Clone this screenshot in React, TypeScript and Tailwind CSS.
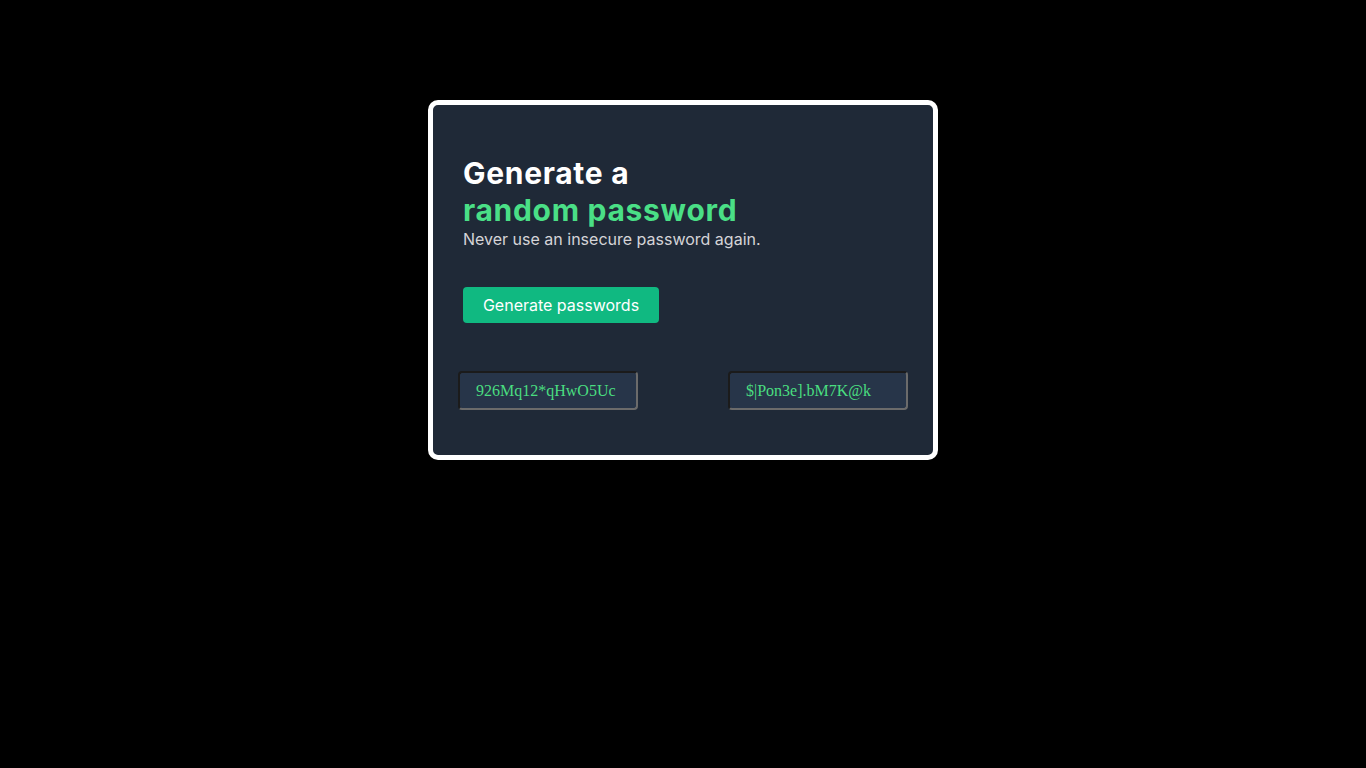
export default function App() {
  const passwords = ["926Mq12*qHwO5Uc", "$|Pon3e].bM7K@k"];

  return (
    <div className="min-h-screen bg-black pt-[100px] font-['Inter',sans-serif]">
      <div className="mx-auto h-[360px] w-[510px] rounded-[10px] border-[5px] border-white bg-[#1f2937] px-[25px]">
        <div className="px-[5px] pt-[50px]">
          <h1 className="text-[30px] font-bold leading-[37px] tracking-[0.7px] text-white">
            Generate a
            <br />
            <span className="text-[#4adf86]">random password</span>
          </h1>
          <p className="text-[16px] leading-[20px] text-[#d5d4d8]">
            Never use an insecure password again.
          </p>
          <button
            type="button"
            className="mt-[38px] h-[36px] w-[196px] rounded-[4px] bg-[#10b981] text-[16px] text-white"
          >
            Generate passwords
          </button>
        </div>
        <div className="mt-[48px] flex justify-between">
          {passwords.map((pw) => (
            <div
              key={pw}
              className="flex h-[39px] w-[180px] items-center rounded-[4px] border-2 border-t-[#1b1b1b] border-l-[#1b1b1b] border-r-[#6b6b6b] border-b-[#6b6b6b] bg-[#273549] pl-[16px] font-['Liberation_Serif',serif] text-[16px] text-[#4ade80]"
            >
              {pw}
            </div>
          ))}
        </div>
      </div>
    </div>
  );
}
